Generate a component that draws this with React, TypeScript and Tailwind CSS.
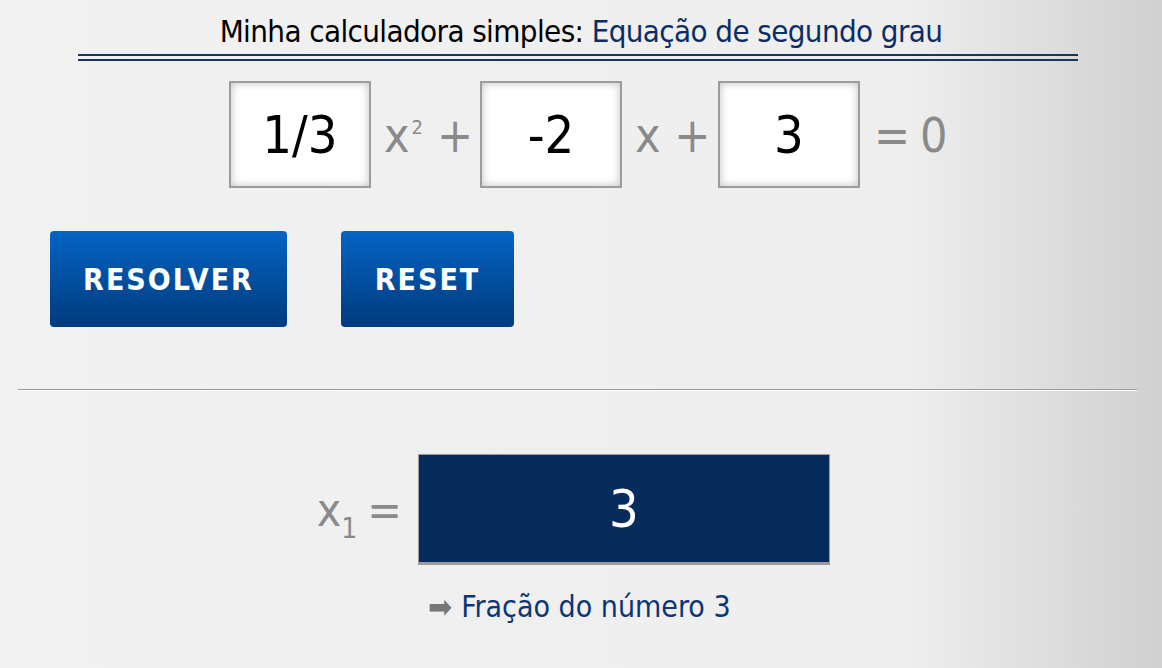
import React from "react";

const font = "font-['Liberation_Sans_Narrow','DejaVu_Sans_Condensed','Roboto',sans-serif]";

const CoefBox = ({ value }: { value: string }) => (
  <div className="flex h-[107px] w-[142px] shrink-0 items-center justify-center border-2 border-[#9c9c9c] bg-white text-[52px] leading-none text-black shadow-[inset_0_0_8px_rgba(0,0,0,0.25)]">
    {value}
  </div>
);

export default function App() {
  return (
    <div className={`min-h-[668px] w-full bg-gradient-to-r from-[#f1f1f1] via-[#eeeeee] via-78% to-[#d0d0d0] ${font} font-stretch-condensed`}>
      {/* Title */}
      <h1 className="pt-[12px] text-center text-[31px] leading-[38px] tracking-[-0.6px] text-black">
        Minha calculadora simples: <span className="text-[#0b2d63]">Equação de segundo grau</span>
      </h1>
      <div className="ml-[78px] mt-[4px] h-[7px] w-[1000px] border-y-2 border-[#17355f]" />

      {/* Equation */}
      <div className="mt-[20px] flex items-center whitespace-nowrap pl-[229px] text-[#8a8a8a]">
        <CoefBox value="1/3" />
        <div className="w-[109px] shrink-0 pl-[13px] text-[48px] leading-none">
          x<span className="relative -top-[18px] ml-[2px] mr-[14px] text-[20px]">2</span>+
        </div>
        <CoefBox value="-2" />
        <div className="w-[96px] shrink-0 pl-[13px] text-[48px] leading-none">x +</div>
        <CoefBox value="3" />
        <div className="w-[82px] shrink-0 pl-[14px] text-[48px] leading-none tracking-[-2px]">= 0</div>
      </div>

      {/* Buttons */}
      <div className="mt-[43px] flex gap-[54px] pl-[50px]">
        <button className="h-[96px] w-[237px] rounded-[4px] bg-gradient-to-b from-[#0564c4] to-[#003b7e] text-[30px] font-bold tracking-[2px] text-white">
          RESOLVER
        </button>
        <button className="h-[96px] w-[173px] rounded-[4px] bg-gradient-to-b from-[#0564c4] to-[#003b7e] text-[30px] font-bold tracking-[2px] text-white">
          RESET
        </button>
      </div>

      <div className="ml-[18px] mr-[25px] mt-[62px] border-t border-b border-t-[#9a9a9a] border-b-white" />

      {/* Result */}
      <div className="mt-[63px] flex items-center pl-[320px]">
        <div className="flex w-[98px] shrink-0 items-center justify-end whitespace-nowrap pr-[16px] text-[46px] leading-none text-[#8a8a8a]">
          <span>
            x<span className="relative top-[12px] text-[28px]">1</span>
          </span>
          <span className="ml-[10px]">=</span>
        </div>
        <div className="flex h-[111px] w-[412px] items-center justify-center border border-b-[3px] border-[#9a9a9a] bg-[#062c5c] text-[52px] leading-none text-white">
          3
        </div>
      </div>

      <div className="mt-[26px] flex items-center whitespace-nowrap pl-[428px] text-[30px] leading-none text-[#0b3673]">
        <span className="mr-[9px] text-[32px] text-[#777777]">➡</span>
        Fração do número 3
      </div>
    </div>
  );
}
